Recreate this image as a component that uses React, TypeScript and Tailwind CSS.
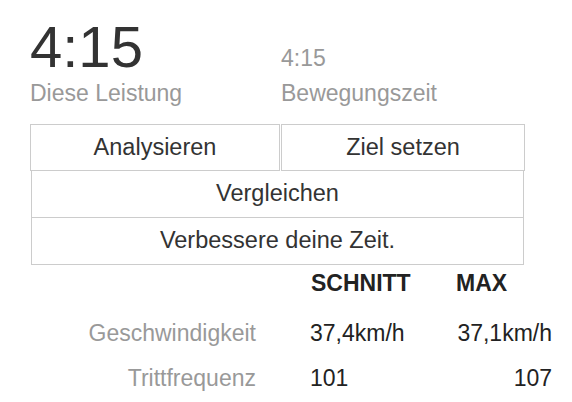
export default function App() {
  const font = { fontFamily: '"Liberation Sans", Arial, sans-serif' }

  return (
    <div className="w-[572px] h-[402px] bg-white overflow-hidden" style={font}>
      {/* time summary */}
      <div className="flex items-end pl-[30px] pt-[18px]">
        <div className="w-[251px]">
          <div className="text-[58px] leading-none text-[#333]">4:15</div>
          <div className="mt-[6px] text-[23px] leading-none text-[#999]">Diese Leistung</div>
        </div>
        <div>
          <div className="text-[23px] leading-none text-[#999]">4:15</div>
          <div className="mt-[12px] text-[23px] leading-none text-[#999]">Bewegungszeit</div>
        </div>
      </div>

      {/* actions */}
      <div className="ml-[30px] mt-[19px] w-[495px] text-[23.5px] text-[#333]">
        <div className="flex">
          <button className="w-[250px] h-[47px] border border-[#ccc] flex items-center justify-center">
            Analysieren
          </button>
          <button className="flex-1 ml-[1px] h-[47px] border border-[#ccc] flex items-center justify-center">
            Ziel setzen
          </button>
        </div>
        <button className="ml-[1px] w-[493px] h-[47px] border-x border-b border-[#ccc] flex items-center justify-center">
          Vergleichen
        </button>
        <button className="ml-[1px] w-[493px] h-[47px] border-x border-b border-[#ccc] flex items-center justify-center">
          Verbessere deine Zeit.
        </button>
      </div>

      {/* stats */}
      <div className="pl-[30px] mt-[7px]">
        <div className="flex text-[23px] leading-none font-bold text-[#222]">
          <div className="w-[225px]" />
          <div className="ml-[56px] w-[145px]">SCHNITT</div>
          <div className="w-[96px]">MAX</div>
        </div>
        <div className="flex mt-[27px] text-[23px] leading-none">
          <div className="w-[226px] text-right text-[#999]">Geschwindigkeit</div>
          <div className="ml-[54px] w-[146px] text-[#222]">37,4km/h</div>
          <div className="w-[96px] text-right text-[#222]">37,1km/h</div>
        </div>
        <div className="flex mt-[22px] text-[23px] leading-none">
          <div className="w-[226px] text-right text-[#999]">Trittfrequenz</div>
          <div className="ml-[54px] w-[146px] text-[#222]">101</div>
          <div className="w-[96px] text-right text-[#222]">107</div>
        </div>
      </div>
    </div>
  )
}
